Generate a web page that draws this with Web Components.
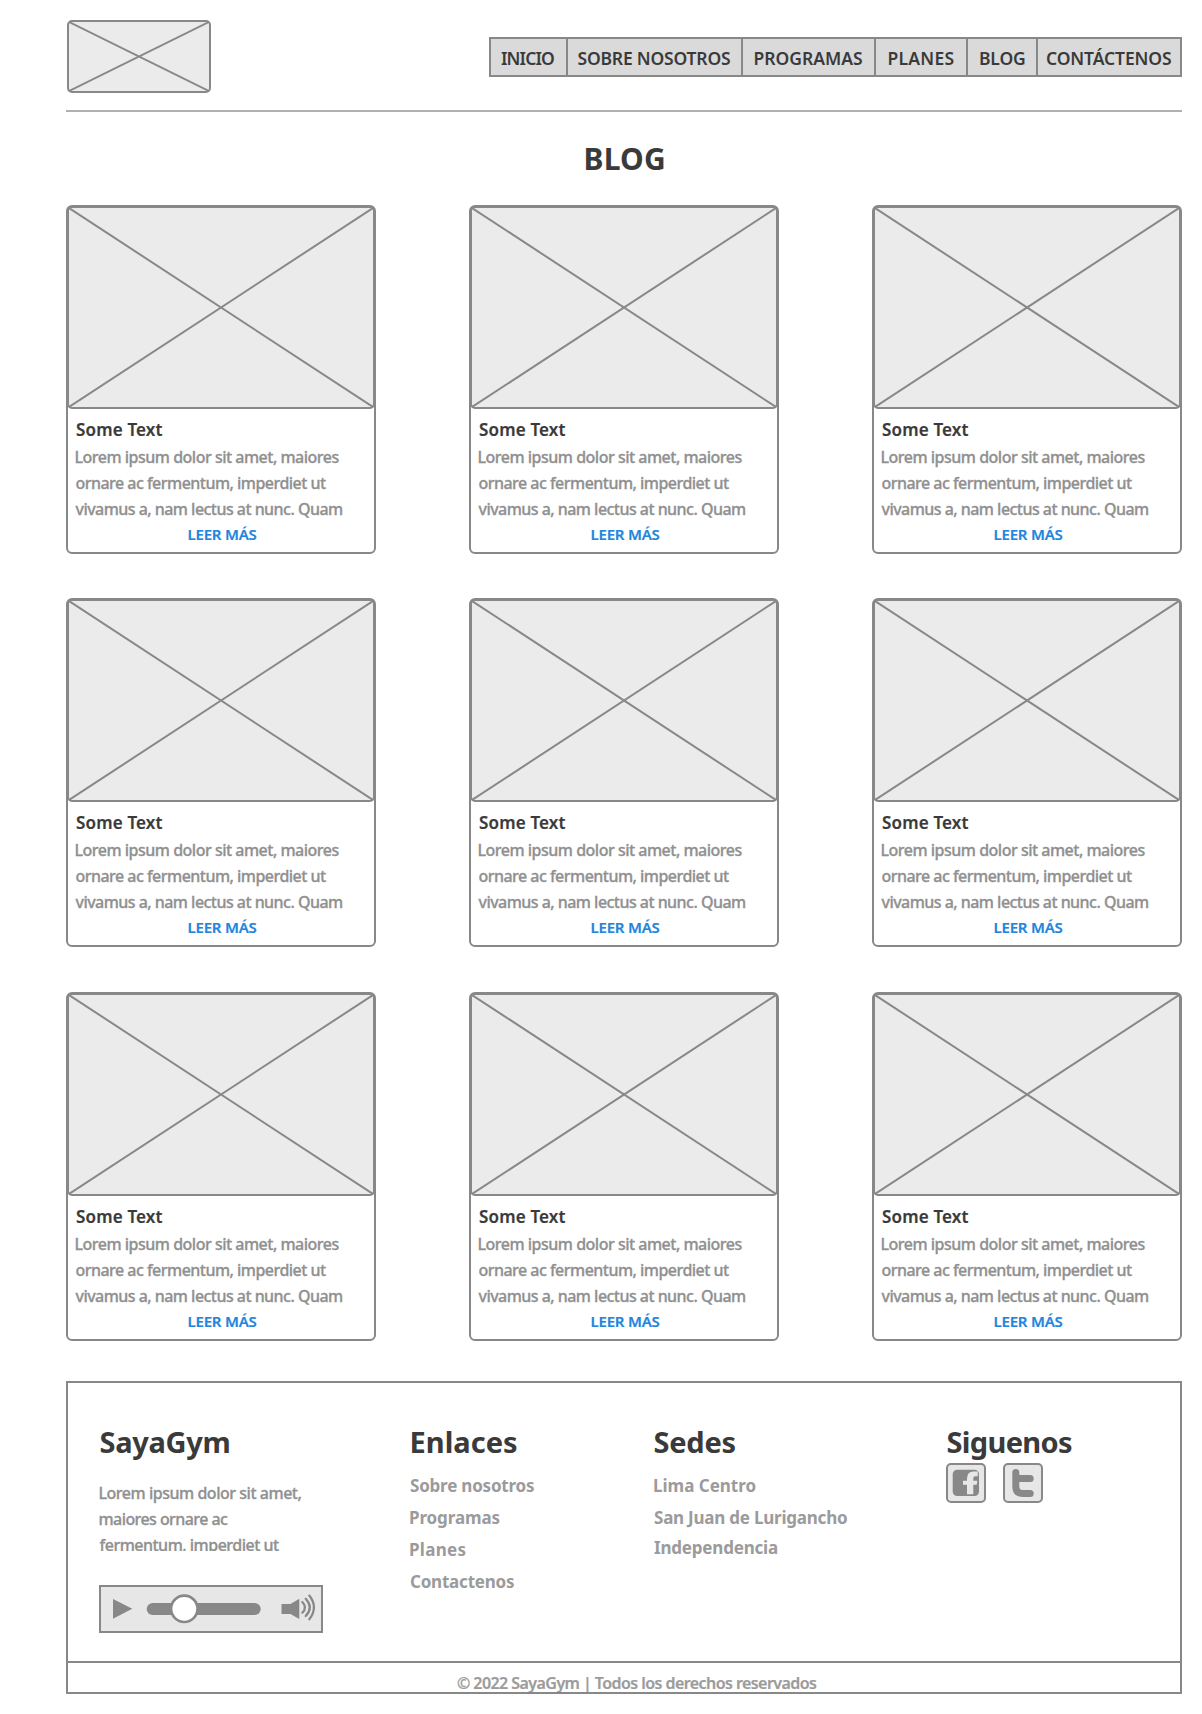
<!DOCTYPE html>
<html lang="es">
<head>
<meta charset="utf-8">
<title>SayaGym - Blog</title>
<style>
  body { margin: 0; background: #fff; font-family: "Noto Sans", "Open Sans", sans-serif; --line: #888; --ink: #3a3a3a; }
</style>
</head>
<body>
<blog-page></blog-page>
<script>
const attach = (el, html) => { el.attachShadow({ mode: 'open' }).innerHTML = html; };
const pen = document.createElement('canvas').getContext('2d');

/* One line of text whose drawn glyphs span exactly `w` pixels. */
class FitText extends HTMLElement {
  connectedCallback() {
    if (this.shadowRoot) return;
    attach(this, `<style>:host{display:block;white-space:nowrap} span{display:inline-block}</style><span><slot></slot></span>`);
    const text = this.textContent, cs = getComputedStyle(this);
    pen.font = `${cs.fontWeight} ${cs.fontSize} ${cs.fontFamily}`;
    const m = pen.measureText(text);
    const ink = m.actualBoundingBoxLeft + m.actualBoundingBoxRight;
    const span = this.shadowRoot.querySelector('span');
    span.style.letterSpacing = ((+this.getAttribute('w') - ink) / (text.length - 1)).toFixed(3) + 'px';
    span.style.marginLeft = m.actualBoundingBoxLeft.toFixed(2) + 'px';
  }
}

class ImageBox extends HTMLElement {
  connectedCallback() {
    attach(this, `<style>
      :host{display:block;box-sizing:border-box;border:2px solid var(--line);border-radius:5px;background:#ebebeb}
      svg{display:block;width:100%;height:100%}
    </style><svg viewBox="0 0 100 100" preserveAspectRatio="none" stroke="#888" stroke-width="2">
      <path d="M0 0L100 100M100 0L0 100" vector-effect="non-scaling-stroke"/></svg>`);
  }
}

class NavBar extends HTMLElement {
  connectedCallback() {
    const items = [['INICIO',77,10,53],['SOBRE NOSOTROS',175,9.5,152.5],['PROGRAMAS',133,11.5,107.5],
      ['PLANES',92,12.5,65],['BLOG',70,12,45],['CONTÁCTENOS',142,9,124]];
    attach(this, `<style>
      :host{display:block}
      nav{display:flex;height:36px;border:2px solid var(--line);background:#dadada}
      a{box-sizing:border-box;border-right:2px solid var(--line);font-weight:600;font-size:17.5px;line-height:38px;color:var(--ink)}
      a:last-child{border:0}
    </style><nav>${items.map(([t,c,p,w]) => `<a style="width:${c}px;padding-left:${p}px"><fit-text w="${w}">${t}</fit-text></a>`).join('')}</nav>`);
  }
}

class BlogCard extends HTMLElement {
  connectedCallback() {
    attach(this, `<style>
      :host{display:block;box-sizing:border-box;width:310px;height:349px;border:2px solid var(--line);border-radius:6px}
      image-box{height:203px;margin:-1px -1px 0}
      .t{margin:9px 0 0 8px;font-weight:600;font-size:17px;line-height:24px;color:var(--ink);-webkit-text-stroke:.2px}
      .p{margin:2px 0 0 7.5px;font-weight:500;font-size:16px;line-height:26px;color:#909090;-webkit-text-stroke:.3px}
      .m{margin:2px 0 0 120.5px;font-weight:600;font-size:15px;line-height:20px;color:#2185dc;-webkit-text-stroke:.2px}
    </style>
    <image-box></image-box>
    <div class="t"><fit-text w="86.5">Some Text</fit-text></div>
    <div class="p"><fit-text w="264">Lorem ipsum dolor sit amet, maiores</fit-text><fit-text w="250.5">ornare ac fermentum, imperdiet ut</fit-text><fit-text w="266.5">vivamus a, nam lectus at nunc. Quam</fit-text></div>
    <div class="m"><fit-text w="68">LEER MÁS</fit-text></div>`);
  }
}

class AudioBar extends HTMLElement {
  connectedCallback() {
    attach(this, `<style>:host{display:block;width:224px;height:48px}svg{display:block}</style>
    <svg width="224" height="48" fill="#888">
      <rect x="1" y="1" width="222" height="46" fill="#e7e7e7" stroke="#888" stroke-width="2"/>
      <path d="M14 14L33.3 23.8L14 33.7Z"/>
      <rect x="47.7" y="18" width="114" height="12" rx="6"/>
      <circle cx="85.3" cy="23.8" r="13.2" fill="#fff" stroke="#888" stroke-width="2.6"/>
      <path d="M182.5 19H191.5L200.3 13.7V34L191.5 29H182.5Z"/>
      <g fill="none" stroke="#888" stroke-width="2.2" stroke-linecap="round">
        <path d="M203.3 17Q208.7 22.4 203.3 27.8"/><path d="M206.7 13.7Q215 22.4 206.7 31.1"/><path d="M210.3 10.5Q219.6 22.4 210.3 34.3"/>
      </g>
    </svg>`);
  }
}

class SocialIcon extends HTMLElement {
  connectedCallback() {
    const glyph = this.getAttribute('name') === 'facebook'
      ? `<rect x="6.7" y="6.7" width="26.3" height="26.3" rx="4.5" fill="#888"/>
         <path fill="#e7e7e7" d="M21 31.3V21.8H17V17.7H21V15.5Q21 8.4 27.5 8.4H31.7V13.2H29Q27.3 13.2 27.3 15V17.7H31.3L30.7 21.8H27.3V31.3Z"/>`
      : `<path fill="none" stroke="#888" stroke-width="7" stroke-linecap="round" stroke-linejoin="round" d="M12.8 9.5V23.5Q12.8 30.5 19.8 30.5H27.2M12.8 15.5H27.2"/>`;
    attach(this, `<style>:host{display:block;width:40px;height:40px}svg{display:block}</style>
    <svg width="40" height="40"><rect x="1" y="1" width="38" height="38" rx="4" fill="#e7e7e7" stroke="#888" stroke-width="2"/>${glyph}</svg>`);
  }
}

class FooterColumn extends HTMLElement {
  connectedCallback() {
    attach(this, `<style>
      :host{display:block}
      h2{margin:0 0 0 .5px;font-weight:700;font-size:29px;line-height:40px;color:var(--ink)}
    </style><h2><fit-text w="${this.getAttribute('w')}">${this.getAttribute('heading')}</fit-text></h2><slot></slot>`);
  }
}

class SiteFooter extends HTMLElement {
  connectedCallback() {
    attach(this, `<style>
      :host{display:block;box-sizing:border-box;height:313px;border:2px solid var(--line)}
      .cols{box-sizing:border-box;height:278px;padding:39px 0 0 32px;display:grid;grid-template-columns:311px 243px 293px 1fr;align-content:start}
      .about{margin:18px 0 34px -.5px;height:71px;overflow-x:visible;overflow-y:clip;font-weight:500;font-size:16px;line-height:26px;color:#909090;-webkit-text-stroke:.3px}
      audio-bar{margin-left:-1px}
      .links{margin-top:8px;font-weight:700;font-size:17px;line-height:32px;color:#9b9b9b}
      .out{margin-left:-1px}
      .up{margin-top:-2px}
      .icons{display:flex;gap:17px;margin:1px 0 0 -1px}
      .copy{box-sizing:border-box;height:31px;border-top:2px solid var(--line);padding:9px 0 0 389px;overflow:hidden;font-weight:600;font-size:16px;line-height:22px;color:#9b9b9b;-webkit-text-stroke:.2px}
    </style>
    <div class="cols">
      <footer-column heading="SayaGym" w="129">
        <div class="about"><fit-text w="202">Lorem ipsum dolor sit amet,</fit-text><fit-text w="128.5">maiores ornare ac</fit-text><fit-text w="179.5">fermentum, imperdiet ut</fit-text></div>
        <audio-bar></audio-bar>
      </footer-column>
      <footer-column heading="Enlaces" w="105.5">
        <div class="links out"><fit-text w="124">Sobre nosotros</fit-text><fit-text w="89.5">Programas</fit-text><fit-text w="55.5">Planes</fit-text><fit-text w="104">Contactenos</fit-text></div>
      </footer-column>
      <footer-column heading="Sedes" w="81">
        <div class="links"><fit-text w="101.5">Lima Centro</fit-text><fit-text w="193">San Juan de Lurigancho</fit-text><fit-text class="up" w="123">Independencia</fit-text></div>
      </footer-column>
      <footer-column heading="Siguenos" w="124.5">
        <div class="icons"><social-icon name="facebook"></social-icon><social-icon name="twitter"></social-icon></div>
      </footer-column>
    </div>
    <div class="copy"><fit-text w="360">© 2022 SayaGym | Todos los derechos reservados</fit-text></div>`);
  }
}

class BlogPage extends HTMLElement {
  connectedCallback() {
    attach(this, `<style>
      :host{display:block;box-sizing:border-box;width:1202px;height:1714px;padding:20px 20px 0 66px}
      header{box-sizing:border-box;height:92px;border-bottom:2px solid #b0b0b0;display:flex;justify-content:space-between;align-items:flex-start}
      header image-box{width:144px;height:73px;margin-left:1px}
      nav-bar{width:693px;margin-top:17px}
      h1{margin:27px 0 26px 519.5px;font-weight:700;font-size:30px;line-height:40px;color:var(--ink)}
      .row{display:flex;justify-content:space-between;margin-bottom:44px}
      .row.b{margin-bottom:45px}
      .row.c{margin-bottom:40px}
    </style>
    <header><image-box></image-box><nav-bar></nav-bar></header>
    <h1><fit-text w="78.5">BLOG</fit-text></h1>
    ${['a','b','c'].map(r => `<div class="row ${r}"><blog-card></blog-card><blog-card></blog-card><blog-card></blog-card></div>`).join('')}
    <site-footer></site-footer>`);
  }
}

customElements.define('fit-text', FitText);
customElements.define('image-box', ImageBox);
customElements.define('nav-bar', NavBar);
customElements.define('blog-card', BlogCard);
customElements.define('audio-bar', AudioBar);
customElements.define('social-icon', SocialIcon);
customElements.define('footer-column', FooterColumn);
customElements.define('site-footer', SiteFooter);
customElements.define('blog-page', BlogPage);
</script>
</body>
</html>
